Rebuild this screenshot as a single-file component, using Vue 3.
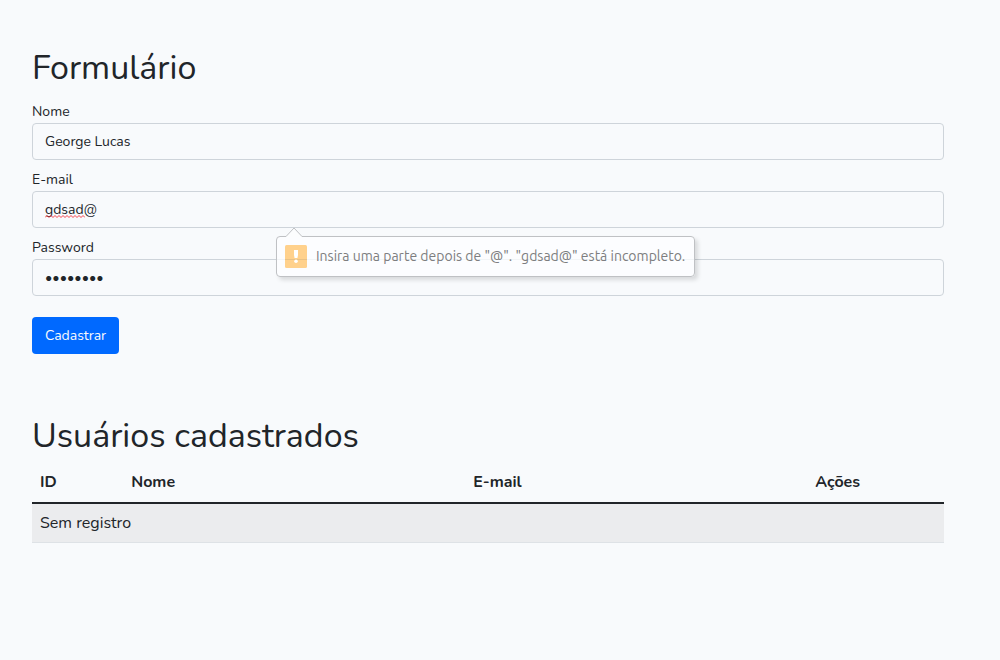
<script setup>
import { ref } from 'vue'

const name = ref('George Lucas')
const email = ref('gdsad@')
const password = ref('12345678')
const users = ref([])
</script>

<template>
  <main class="page">
    <section>
      <h1 class="title">Formulário</h1>
      <form class="form" novalidate @submit.prevent>
        <div class="field">
          <label for="name">Nome</label>
          <input id="name" v-model="name" type="text" />
        </div>
        <div class="field">
          <label for="email">E-mail</label>
          <input id="email" v-model="email" type="email" aria-describedby="email-hint" />
          <svg class="squiggle" width="40" height="3" viewBox="0 0 40 3" aria-hidden="true">
            <path
              d="M0 2.5 L2 .5 L4 2.5 L6 .5 L8 2.5 L10 .5 L12 2.5 L14 .5 L16 2.5 L18 .5 L20 2.5 L22 .5 L24 2.5 L26 .5 L28 2.5 L30 .5 L32 2.5 L34 .5 L36 2.5 L38 .5 L40 2.5"
              fill="none" stroke="#f5424b" />
          </svg>
          <div id="email-hint" class="hint" role="alert">
            <svg class="arrow" width="18" height="10" viewBox="0 0 18 10" aria-hidden="true">
              <path d="M1 9.5 L9 1 L17 9.5 V10 H1 Z" fill="#fcfdfe" />
              <path d="M.5 9.5 H1 L9 1 L17 9.5 H17.5" fill="none" stroke="#bfc1c4" />
            </svg>
            <svg class="warn" width="22" height="23" viewBox="0 0 22 23" aria-hidden="true">
              <rect width="22" height="23" rx="1.5" fill="#ffd18c" />
              <path d="M0 14.5 H22" stroke="#e9c184" />
              <path d="M9 5 H13 V10 L12.4 13 H9.6 L9 10 Z" fill="#fff" />
              <circle cx="11" cy="16.3" r="1.8" fill="#fff" />
            </svg>
            <span>Insira uma parte depois de "@". "gdsad@" está incompleto.</span>
          </div>
        </div>
        <div class="field">
          <label for="password">Password</label>
          <input id="password" v-model="password" type="password" />
        </div>
        <button class="submit" type="submit">Cadastrar</button>
      </form>
    </section>

    <section>
      <h1 class="title">Usuários cadastrados</h1>
      <table class="users">
        <thead>
          <tr>
            <th class="id" scope="col">ID</th>
            <th class="wide" scope="col">Nome</th>
            <th class="wide" scope="col">E-mail</th>
            <th scope="col">Ações</th>
          </tr>
        </thead>
        <tbody>
          <tr v-if="!users.length">
            <td colspan="4">Sem registro</td>
          </tr>
        </tbody>
      </table>
    </section>
  </main>
</template>

<style>
body {
  margin: 0;
  background: #f8fafc;
}
</style>

<style scoped>
.page {
  display: flex;
  flex-direction: column;
  gap: 62px;
  padding: 48px 56px 48px 32px;
  color: #212529;
  font-family: Nunito, Lato, sans-serif;
  font-size: 14px;
  line-height: 23px;
}

.title {
  margin: 0 0 6px;
  font-size: 34px;
  font-weight: 400;
  line-height: 41px;
}

.form {
  display: flex;
  flex-direction: column;
  gap: 8px;
  padding-top: 5px;
}

.field {
  position: relative;
  display: flex;
  flex-direction: column;
}

.field input {
  box-sizing: border-box;
  width: 100%;
  height: 37px;
  padding: 6px 12px;
  border: 1px solid #ced4da;
  border-radius: 4px;
  background: transparent;
  color: inherit;
  font: inherit;
}

.squiggle {
  position: absolute;
  top: 47px;
  left: 13px;
}

.hint {
  position: absolute;
  z-index: 1;
  top: 68px;
  left: 244px;
  display: flex;
  align-items: center;
  gap: 9px;
  box-sizing: border-box;
  height: 41px;
  padding: 0 9px 0 8px;
  border: 1px solid #bfc1c4;
  border-radius: 4px;
  background: rgba(253, 254, 255, 0.78);
  box-shadow: 3px 3px 4px rgba(0, 0, 0, 0.13);
  color: #7d7e80;
  font-family: Ubuntu, "Open Sans", sans-serif;
  font-size: 14px;
  white-space: nowrap;
}

.arrow {
  position: absolute;
  top: -10px;
  left: 8px;
}

.warn {
  flex: none;
}

.submit {
  align-self: flex-start;
  margin-top: 13px;
  padding: 7px 13px;
  border: 0;
  border-radius: 4px;
  background: #0069ff;
  color: #f8fafc;
  font: inherit;
}

.users {
  width: 100%;
  border-collapse: collapse;
  table-layout: fixed;
  font-size: 16px;
}

.users th,
.users td {
  padding: 8px;
  text-align: left;
}

.users th {
  border-bottom: 2px solid #212529;
  font-weight: 700;
}

.users td {
  border-bottom: 1px solid #dee2e6;
  background: #ebecee;
  line-height: 22px;
}

.id {
  width: 10%;
  box-sizing: border-box;
}

.wide {
  width: 37.5%;
  box-sizing: border-box;
}
</style>
